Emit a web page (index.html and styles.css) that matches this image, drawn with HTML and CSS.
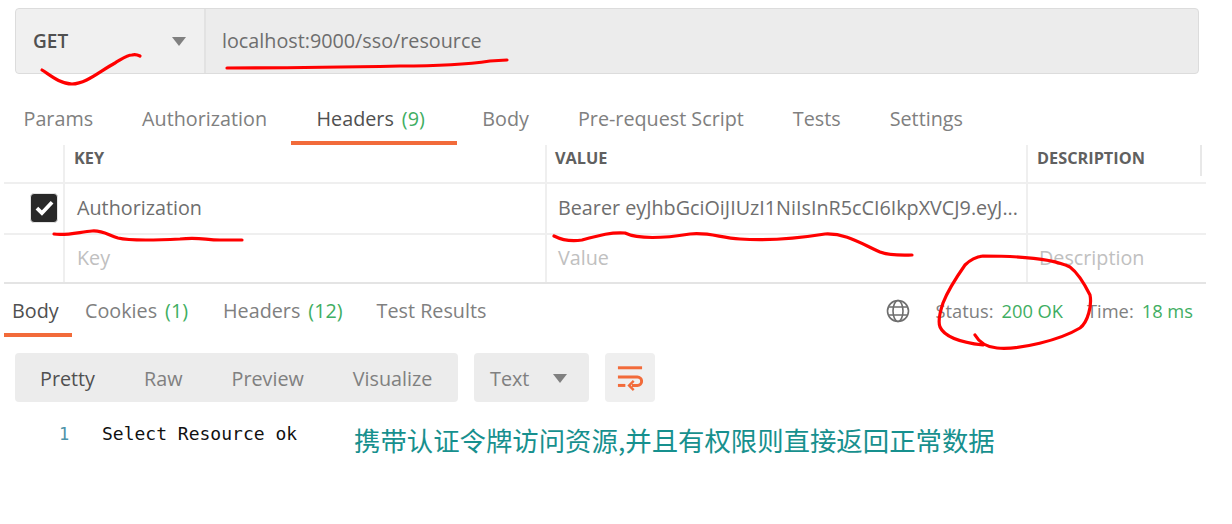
FILE: index.html
```html
<!DOCTYPE html>
<html lang="en">
<head>
<meta charset="utf-8">
<title>GET localhost:9000/sso/resource</title>
<link rel="stylesheet" href="styles.css">
</head>
<body>
<div class="page">
  <div class="urlbar">
    <div class="method"><span>GET</span><i class="caret"></i></div>
    <div class="url">localhost:9000/sso/resource</div>
  </div>
  <nav class="tabs">
    <a class="tab">Params</a>
    <a class="tab">Authorization</a>
    <a class="tab active">Headers<span class="count">(9)</span></a>
    <a class="tab">Body</a>
    <a class="tab">Pre-request Script</a>
    <a class="tab">Tests</a>
    <a class="tab">Settings</a>
  </nav>
  <div class="table">
    <div class="row head">
      <div class="cell check"></div>
      <div class="cell key">KEY</div>
      <div class="cell value">VALUE</div>
      <div class="cell desc">DESCRIPTION</div>
    </div>
    <div class="row first">
      <div class="cell check">
        <span class="box"><svg width="21" height="17" viewBox="0 0 18 14"><path d="M2.500 7.500l4.300 4.300L15.500 2.500" fill="none" stroke="#fff" stroke-width="3.200"/></svg></span>
      </div>
      <div class="cell key text">Authorization</div>
      <div class="cell value text"><span class="clip">Bearer eyJhbGciOiJIUzI1NiIsInR5cCI6IkpXVCJ9.eyJ...</span></div>
      <div class="cell desc"></div>
    </div>
    <div class="row last">
      <div class="cell check"></div>
      <div class="cell key ph">Key</div>
      <div class="cell value ph">Value</div>
      <div class="cell desc ph">Description</div>
    </div>
  </div>
  <div class="restabs">
    <a class="rtab active">Body</a>
    <a class="rtab">Cookies<span class="count">(1)</span></a>
    <a class="rtab">Headers<span class="count">(12)</span></a>
    <a class="rtab">Test Results</a>
    <div class="meta">
      <svg class="globe" width="24" height="24" viewBox="0 0 24 24" fill="none" stroke="#6e6e6e" stroke-width="1.600"><circle cx="12" cy="12" r="10.500"/><ellipse cx="12" cy="12" rx="5" ry="10.500"/><path d="M2.600 8h18.800M2.600 16h18.800"/></svg>
      <span class="status">Status:<b>200 OK</b></span>
      <span class="time">Time:<b>18 ms</b></span>
    </div>
  </div>
  <div class="controls">
    <div class="group views">
      <span class="view on">Pretty</span>
      <span class="view">Raw</span>
      <span class="view">Preview</span>
      <span class="view">Visualize</span>
    </div>
    <div class="group format"><span>Text</span><i class="caret"></i></div>
    <div class="group wrap">
      <svg width="26" height="26" viewBox="0 0 28 28" fill="none" stroke="#f26b3a" stroke-width="3.200"><path d="M1 3h26"/><path d="M1 13h21a4.500 4.500 0 0 1 0 9h-6"/><path d="M1 22h8"/><path d="M18 17l-5 5 5 5" stroke-width="2.600"/></svg>
    </div>
  </div>
  <div class="output">
    <span class="lineno">1</span>
    <code class="code">Select Resource ok</code>
    <p class="note">携带认证令牌访问资源,并且有权限则直接返回正常数据</p>
  </div>
  <svg class="ink" width="1232" height="524" viewBox="0 0 1232 524" fill="none" stroke="#f00" stroke-width="3.200" stroke-linecap="round" stroke-linejoin="round">
    <path d="M42 70C50 75 60 84 72 84C86 84 100 71 115 63C122 59 127 55 132 55C135 54 138 55 140 56"/>
    <path d="M227 68C290 68 350 67 400 66C440 66 470 64 490 61L507 60"/>
    <path d="M54 234C65 236 80 232 92 231C102 230 108 235 118 238C130 241 160 240 180 239C200 237 205 240 220 240L242 240"/>
    <path d="M554 236C562 240 570 242 582 240C600 235 612 232 625 233C640 240 665 238 690 234C710 232 720 238 740 239C770 241 800 238 825 234C845 233 860 243 880 252C890 256 905 255 912 255"/>
    <path d="M975 335C979 342 985 347 997 348C1020 350 1060 340 1080 328C1088 322 1092 305 1090 295C1085 285 1078 273 1070 267C1050 257 1010 256 983 256C975 257 970 260 965 265C958 275 948 290 943 303C940 312 938 322 940 327C944 336 957 342 983 345"/>
  </svg>
</div>
</body>
</html>
```

FILE: styles.css
```css
* { box-sizing: border-box; }
html, body { margin: 0; background: #fff; }
body { font-family: "Open Sans", "Noto Sans", sans-serif; font-size: 19.750px; color: #808080; overflow: hidden; }
.page { position: relative; width: 1232px; height: 524px; padding-top: 8px; }

.urlbar { display: flex; width: 1184px; height: 66px; margin-left: 15px; background: #ececec; border: 1px solid #dcdcdc; border-radius: 4px; }
.method { display: flex; align-items: center; justify-content: space-between; width: 190px; padding: 0 18px 0 17px; background: #f0f0f0; border-right: 2px solid #e2e2e2; border-radius: 4px 0 0 4px; font-weight: 600; font-size: 19px; color: #505050; }
.url { display: flex; align-items: center; padding: 0 0 2px 16px; color: #6e6e6e; }
.caret { display: block; width: 0; height: 0; border: 7px solid transparent; border-top: 9px solid #808080; border-bottom: 0; }

.tabs { display: flex; height: 71px; }
.tab { display: flex; align-items: flex-start; height: 71px; padding: 31px 24.500px 0; }
.tab:first-child { margin-left: -1px; }
.tab.active { color: #505050; border-bottom: 4px solid #f26b3a; margin: 0 1px 0 -1px; padding: 31px 32px 0 26px; }
.count { margin-left: 8px; color: #3fae62; }

.table { margin-left: 4px; width: 1202px; }
.row { display: flex; height: 49px; border-bottom: 2px solid #efefef; }
.row.head { height: 39px; font-size: 16.300px; font-weight: 700; color: #606060; }
.row.first { height: 51px; }
.row.last { border-bottom-color: #e4e4e4; }
.cell { display: flex; align-items: center; border-right: 2px solid #efefef; padding-left: 9px; }
.check { width: 61px; padding: 0 0 0 26px; }
.key { width: 482px; padding-left: 12px; }
.value { width: 481px; padding-left: 11px; }
.desc { flex: 1; border-right: 0; padding-left: 11px; }
.row.head .cell { padding-bottom: 11px; }
.row.head .key { padding-left: 9px; }
.row.head .value { padding-left: 8px; }
.row.head .desc { position: relative; padding-left: 9px; }
.row.head .desc::after { content: ""; position: absolute; right: 4px; top: 0; height: 31px; border-right: 2px solid #e8e8e8; }
.text { color: #6e6e6e; padding-bottom: 2px; }
.ph { color: #c0c0c0; padding-bottom: 2px; }
.box { display: flex; align-items: center; justify-content: center; flex: none; width: 28px; height: 30px; background: #282828; border: 1px solid #e4e4e4; border-radius: 4px; margin-bottom: 2px; }
.clip { white-space: nowrap; overflow: hidden; }

.restabs { display: flex; align-items: stretch; height: 53px; padding-right: 39px; }
.rtab { display: flex; align-items: center; height: 53px; padding: 0 17px; }
.rtab.active { width: 68px; margin-left: 4px; padding: 4px 0 0 8px; color: #505050; border-bottom: 4px solid #f26b3a; }
.rtab:nth-child(2) { margin: 0 1px 0 -4px; }
.meta { display: flex; align-items: center; margin-left: auto; font-size: 18.300px; }
.meta b { font-weight: 400; color: #3fae62; margin-left: 8px; }
.globe { margin-right: 26px; }
.status { margin-right: 24px; }

.controls { display: flex; gap: 16px; margin: 16px 0 0 15px; height: 49px; }
.group { display: flex; align-items: center; background: #ececec; border-radius: 4px; padding-top: 2px; }
.views { width: 443px; padding-left: 25px; gap: 49px; }
.view.on { color: #505050; }
.format { width: 115px; padding: 2px 22px 0 16px; justify-content: space-between; }
.wrap { width: 50px; justify-content: center; background: #efefef; padding-top: 0; }

.output { position: relative; display: flex; align-items: flex-start; padding: 22px 0 0 59px; }
.lineno { width: 43px; font-family: "DejaVu Sans Mono", monospace; font-size: 17px; line-height: 20px; color: #4f93a8; }
.code { font-family: "DejaVu Sans Mono", monospace; font-size: 18px; line-height: 20px; color: #111; }
.note { position: absolute; left: 354px; top: 20px; margin: 0; font-family: "Noto Sans CJK SC", "Noto Sans", sans-serif; font-size: 26.400px; line-height: 36px; color: #17908e; white-space: nowrap; }

.ink { position: absolute; left: 0; top: 0; pointer-events: none; }
```
